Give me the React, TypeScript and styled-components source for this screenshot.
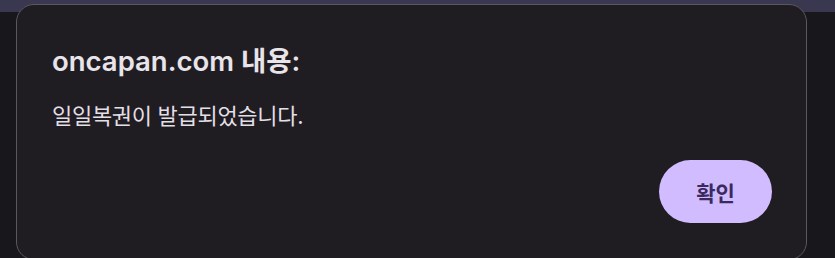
import React from "react";
import styled, { createGlobalStyle } from "styled-components";

const Global = createGlobalStyle`
  html, body { margin: 0; padding: 0; }
  body {
    width: 835px;
    height: 258px;
    overflow: hidden;
    background: #18171b;
    font-family: Inter, "Noto Sans CJK KR", "Noto Sans", sans-serif;
  }
`;

const Page = styled.div`
  position: relative;
  width: 835px;
  height: 258px;
  display: flex;
  flex-direction: column;
`;

const TopStrip = styled.div`
  height: 12px;
  background: #3a3750;
`;

const Backdrop = styled.div`
  flex: 1;
  background: #18171b;
`;

const Dialog = styled.div`
  position: absolute;
  left: 16px;
  top: 4px;
  width: 791px;
  height: 256px;
  box-sizing: border-box;
  background: #1f1d22;
  border: 1.5px solid #5a585f;
  border-radius: 18px;
  padding: 40px 34px 0 35px;
  display: flex;
  flex-direction: column;
`;

const Title = styled.h2`
  margin: 0;
  font-size: 27.5px;
  font-weight: 600;
  color: #e8e4ea;
  line-height: 32px;
`;

const Message = styled.p`
  margin: 24px 0 0 0;
  font-size: 22px;
  font-weight: 400;
  color: #e3dfe6;
  line-height: 30px;
  letter-spacing: -0.3px;
`;

const Actions = styled.div`
  display: flex;
  justify-content: flex-end;
  margin-top: 29px;
`;

const ConfirmButton = styled.button`
  width: 113px;
  height: 63px;
  border: none;
  border-radius: 32px;
  background: #d0bcfe;
  color: #3a2a5e;
  font-family: inherit;
  font-size: 21px;
  font-weight: 600;
  cursor: pointer;
`;

export default function App() {
  return (
    <>
      <Global />
      <Page>
        <TopStrip />
        <Backdrop />
        <Dialog role="dialog">
          <Title>oncapan.com 내용:</Title>
          <Message>일일복권이 발급되었습니다.</Message>
          <Actions>
            <ConfirmButton>확인</ConfirmButton>
          </Actions>
        </Dialog>
      </Page>
    </>
  );
}
